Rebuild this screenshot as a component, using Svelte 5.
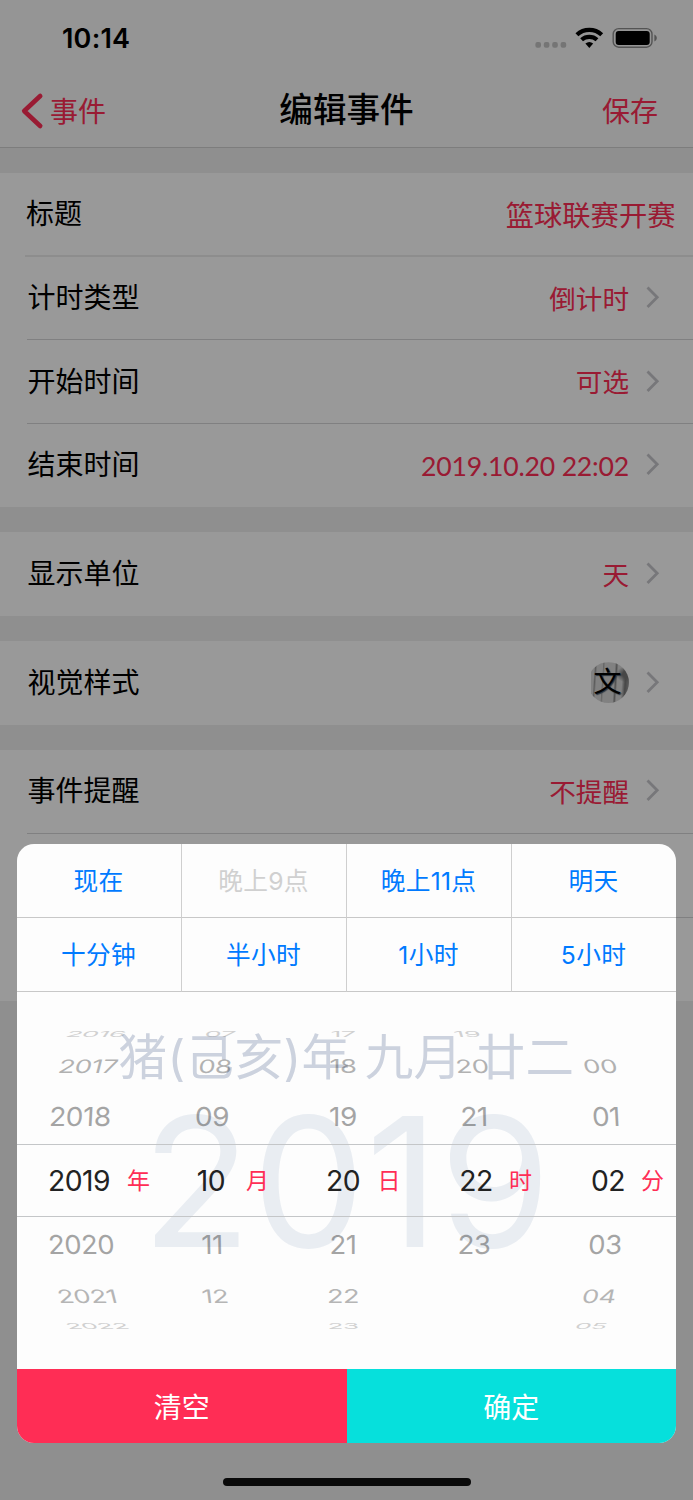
<script>
  const groups = [
    [
      { label: '标题', value: '篮球联赛开赛', input: true },
      { label: '计时类型', value: '倒计时' },
      { label: '开始时间', value: '可选' },
      { label: '结束时间', value: '2019.10.20 22:02', digits: true }
    ],
    [{ label: '显示单位', value: '天' }],
    [{ label: '视觉样式', thumb: '文' }],
    [{ label: '事件提醒', value: '不提醒' }, { label: '' }, { label: '' }]
  ];

  const shortcuts = [
    { text: '现在' },
    { text: '晚上9点', disabled: true },
    { text: '晚上11点' },
    { text: '明天' },
    { text: '十分钟' },
    { text: '半小时' },
    { text: '1小时' },
    { text: '5小时' }
  ];

  // x is the centre of each value, from the left edge of the column
  const columns = [
    { unit: '年', unitX: 109.5, width: 132, items: ['2016', '2017', '2018', '2019', '2020', '2021', '2022'], x: [79, 70.5, 63, 61.5, 63.5, 69.5, 79.5], skew: [-35, -14, -3, 0, 3, 14, 35] },
    { unit: '月', unitX: 96.5, width: 131, items: ['07', '08', '09', '10', '11', '12', ''], x: [71, 66, 63, 62, 63, 66, 71], skew: [-18, -8, -1, 0, 1, 7, 18] },
    { unit: '日', unitX: 97, width: 132, items: ['17', '18', '19', '20', '21', '22', '23'], x: [63, 63, 63, 63, 63, 63, 63], skew: [0, 0, 0, 0, 0, 0, 0] },
    { unit: '时', unitX: 96.5, width: 131, items: ['19', '20', '21', '22', '23', '', ''], x: [55, 60, 62, 63.5, 62, 60, 55], skew: [18, 7, 1, 0, -1, -7, -18] },
    { unit: '分', unitX: 97.5, width: 133, items: ['', '00', '01', '02', '03', '04', '05'], x: [48, 57, 62.5, 64.5, 62, 56, 48], skew: [35, 12, 3, 0, -3, -12, -32] }
  ];

  // the drum gets flatter and paler away from the middle row
  const drum = [
    { height: 17, sx: 0.96, sy: 0.29, opacity: 0.2 },
    { height: 46, sx: 0.98, sy: 0.66, opacity: 0.34 },
    { height: 56, sx: 1, sy: 0.93, opacity: 0.4 },
    { height: 73, sx: 1.01, sy: 1.02, opacity: 1 },
    { height: 55, sx: 0.98, sy: 0.93, opacity: 0.4 },
    { height: 46, sx: 0.97, sy: 0.66, opacity: 0.32 },
    { height: 15, sx: 0.93, sy: 0.29, opacity: 0.2 }
  ];
</script>

<div class="screen">
  <header>
    <div class="status">
      <span class="clock">10:14</span>
      <svg class="signal" width="124" height="26" viewBox="0 0 124 26">
        <g fill="#c3c3c3">
          <rect x="2.400" y="16" width="5.600" height="5.800" rx="2" />
          <rect x="10.800" y="16" width="5.600" height="5.800" rx="2" />
          <rect x="19.200" y="16" width="5.600" height="5.800" rx="2" />
          <rect x="27.600" y="16" width="5.600" height="5.800" rx="2" />
        </g>
        <g fill="none" stroke="#000" stroke-width="4.200">
          <path d="M43.900 8.800a18.200 18.200 0 0 1 24.800 0" />
          <path d="M48.600 13.800a11.600 11.600 0 0 1 15.400 0" />
        </g>
        <path d="M52.400 17.600a6 6 0 0 1 7.800 0l-3.900 4.400z" />
        <rect x="80.200" y="2.600" width="38.800" height="18.600" rx="5.500" fill="none" stroke="#8c8c8c" stroke-width="1.400" />
        <rect x="82.700" y="5" width="34" height="14" rx="3" />
        <path d="M121.400 8.500c1.600.7 2.400 2 2.400 3.500s-.8 2.800-2.400 3.500z" fill="#8c8c8c" />
      </svg>
    </div>
    <nav>
      <span class="back">
        <svg width="24" height="38" viewBox="0 0 24 38">
          <path d="M20.200 4L4.200 19l16 15" fill="none" stroke="#ff2d55" stroke-width="4.600" stroke-linecap="round" stroke-linejoin="round" />
        </svg>
        <span>事件</span>
      </span>
      <h1>编辑事件</h1>
      <span class="save">保存</span>
    </nav>
  </header>

  {#each groups as rows}
    <section>
      {#each rows as row}
        <div class="row" class:input={row.input}>
          <span class="label">{row.label}</span>
          {#if row.thumb}
            <span class="thumb">{row.thumb}</span>
          {:else}
            <span class="value" class:digits={row.digits}>{row.value ?? ''}</span>
          {/if}
          {#if !row.input}
            <svg class="chevron" width="14" height="24" viewBox="0 0 14 24">
              <path d="M1.500 1.500L11.200 11.300 1.500 21.100" fill="none" stroke="#c7c7cc" stroke-width="2.800" />
            </svg>
          {/if}
        </div>
      {/each}
    </section>
  {/each}

  <div class="backdrop"></div>

  <div class="panel">
    <div class="shortcuts">
      {#each shortcuts as item}
        <button class:disabled={item.disabled}>{item.text}</button>
      {/each}
    </div>
    <div class="picker">
      <div class="lunar">猪(己亥)年 九月 廿二</div>
      <div class="year">2019</div>
      <div class="selection"></div>
      <div class="wheels">
        {#each columns as column}
          <div class="wheel" style="width: {column.width}px">
            {#each column.items as item, i}
              <div class="cell" style="height: {drum[i].height}px">
                <span
                  class="number"
                  style="margin-left: {column.x[i] - 50}px; opacity: {drum[i].opacity}; transform: skewX({column.skew[i]}deg) scale({drum[i].sx}, {drum[i].sy})"
                >{item}</span>
                {#if i === 3}
                  <span class="unit" style="margin-left: {column.unitX - column.x[i] - 50}px">{column.unit}</span>
                {/if}
              </div>
            {/each}
          </div>
        {/each}
      </div>
    </div>
    <footer>
      <button class="clear">清空</button>
      <button class="confirm">确定</button>
    </footer>
  </div>

  <div class="home"></div>
</div>

<style>
  .screen {
    position: relative;
    width: 693px;
    height: 1500px;
    overflow: hidden;
    background: #eeeeee;
    color: #000;
    font-family: Inter, 'Noto Sans CJK SC', sans-serif;
    font-size: 28px;
    line-height: 40px;
    white-space: nowrap;
  }

  header {
    box-sizing: border-box;
    height: 148px;
    background: #f8f8f8;
    border-bottom: 1px solid #d0d0d0;
  }

  .status {
    display: flex;
    justify-content: space-between;
    height: 76px;
    padding: 26px 36px 0 62px;
    box-sizing: border-box;
  }

  .clock {
    font-size: 27px;
    font-weight: 600;
    line-height: 26px;
    letter-spacing: 0.200px;
  }

  nav {
    display: grid;
    grid-template-columns: 1fr auto 1fr;
    align-items: center;
    height: 70px;
    padding: 0 35px 0 20px;
    color: #ff2d55;
  }

  .back {
    display: flex;
    align-items: center;
    gap: 6px;
  }

  .back span,
  .save {
    padding-top: 2px;
  }

  h1 {
    margin: 0 0 2px 15px;
    color: #000;
    font-size: 33.600px;
    font-weight: 500;
  }

  .save {
    text-align: right;
  }

  section {
    margin-top: 25px;
    background: #fff;
  }

  header + section {
    margin-top: 24.500px;
  }

  .row {
    position: relative;
    display: flex;
    align-items: center;
    box-sizing: border-box;
    height: 83.700px;
    padding: 0 33px 0 27.500px;
  }

  .row:not(:last-child)::after {
    content: '';
    position: absolute;
    right: 0;
    bottom: -0.500px;
    left: 27px;
    height: 1px;
    background: #d6d6d8;
  }

  .row.input {
    padding: 0 17.500px 0 26px;
  }

  .row.input::after {
    bottom: -1px;
    left: 25px;
    height: 2px;
    background: #ebebeb;
  }

  .label {
    flex: 1;
  }

  .value {
    padding-top: 1px;
    color: #ff2d55;
    font-size: 26.600px;
  }

  .input .value {
    padding-top: 3px;
    font-size: 28.300px;
  }

  .value.digits {
    padding-top: 2px;
    font-family: Lato, sans-serif;
    letter-spacing: -0.200px;
  }

  .thumb {
    width: 41px;
    height: 41px;
    border-radius: 50%;
    background:
      radial-gradient(ellipse at 95% 30%, #777 0 8%, transparent 20%),
      linear-gradient(94deg, transparent 15%, #999 18%, transparent 22% 34%, #aaa 36%, transparent 40% 62%, #888 66%, transparent 70% 80%, #777 88%, #aaa),
      #d8d8d8;
    clip-path: inset(0 0 0 3px);
    line-height: 41px;
    text-align: center;
    text-indent: -2px;
    text-shadow: 1px 1px 1px #456;
  }

  .chevron {
    margin-left: 17px;
  }

  .thumb + .chevron {
    margin-left: 17px;
  }

  .backdrop {
    position: absolute;
    inset: 0;
    background: rgba(0, 0, 0, 0.4);
  }

  .panel {
    position: absolute;
    top: 843.500px;
    left: 17px;
    display: flex;
    flex-direction: column;
    width: 659px;
    height: 599px;
    overflow: hidden;
    border-radius: 17px;
    background: #fdfdfd;
  }

  button {
    padding: 0;
    border: 0;
    background: none;
    font: inherit;
  }

  .shortcuts {
    display: grid;
    grid-template-columns: 165px 165px 165px 164px;
    grid-template-rows: 74px 74px;
  }

  .shortcuts button {
    padding: 2px 1px 0 0;
    border-right: 1px solid #cfcfcf;
    border-bottom: 1px solid #c8c8c8;
    color: #007aff;
    font-size: 24.700px;
    letter-spacing: 0.300px;
  }

  .shortcuts button:nth-child(4n) {
    border-right: 0;
  }

  .shortcuts .disabled {
    color: #d0d0d0;
  }

  .picker {
    position: relative;
    flex: 1;
  }

  .lunar {
    position: absolute;
    top: 31px;
    left: 0;
    right: 0;
    color: #ccd2de;
    font-size: 48.500px;
    line-height: 70px;
    letter-spacing: 0.450px;
    text-align: center;
  }

  .year {
    position: absolute;
    top: 100px;
    left: 0;
    right: 0;
    color: #e9edf2;
    font-size: 180px;
    line-height: 180px;
    letter-spacing: 0.400px;
    text-align: center;
  }

  .selection {
    position: absolute;
    top: 152px;
    left: 0;
    right: 0;
    height: 71px;
    border-top: 1px solid #c4c6c8;
    border-bottom: 1px solid #c4c6c8;
  }

  .wheels {
    position: relative;
    display: flex;
    padding-top: 34px;
  }

  .cell {
    display: flex;
    align-items: center;
  }

  .number,
  .unit {
    flex: none;
    width: 100px;
    text-align: center;
  }

  .number {
    color: #222;
    font-size: 28px;
    letter-spacing: -0.500px;
  }

  .unit {
    width: 24px;
    color: #ff2d55;
    font-size: 23px;
  }

  footer {
    display: flex;
    height: 74px;
  }

  footer button {
    flex: 1;
    padding-top: 4px;
    color: #fff;
    font-size: 28px;
  }

  .clear {
    background: #ff2d55;
  }

  .confirm {
    background: #06e0dc;
  }

  .home {
    position: absolute;
    left: 222.500px;
    bottom: 14px;
    width: 248px;
    height: 8px;
    border-radius: 4px;
    background: #0a0a0a;
  }
</style>
